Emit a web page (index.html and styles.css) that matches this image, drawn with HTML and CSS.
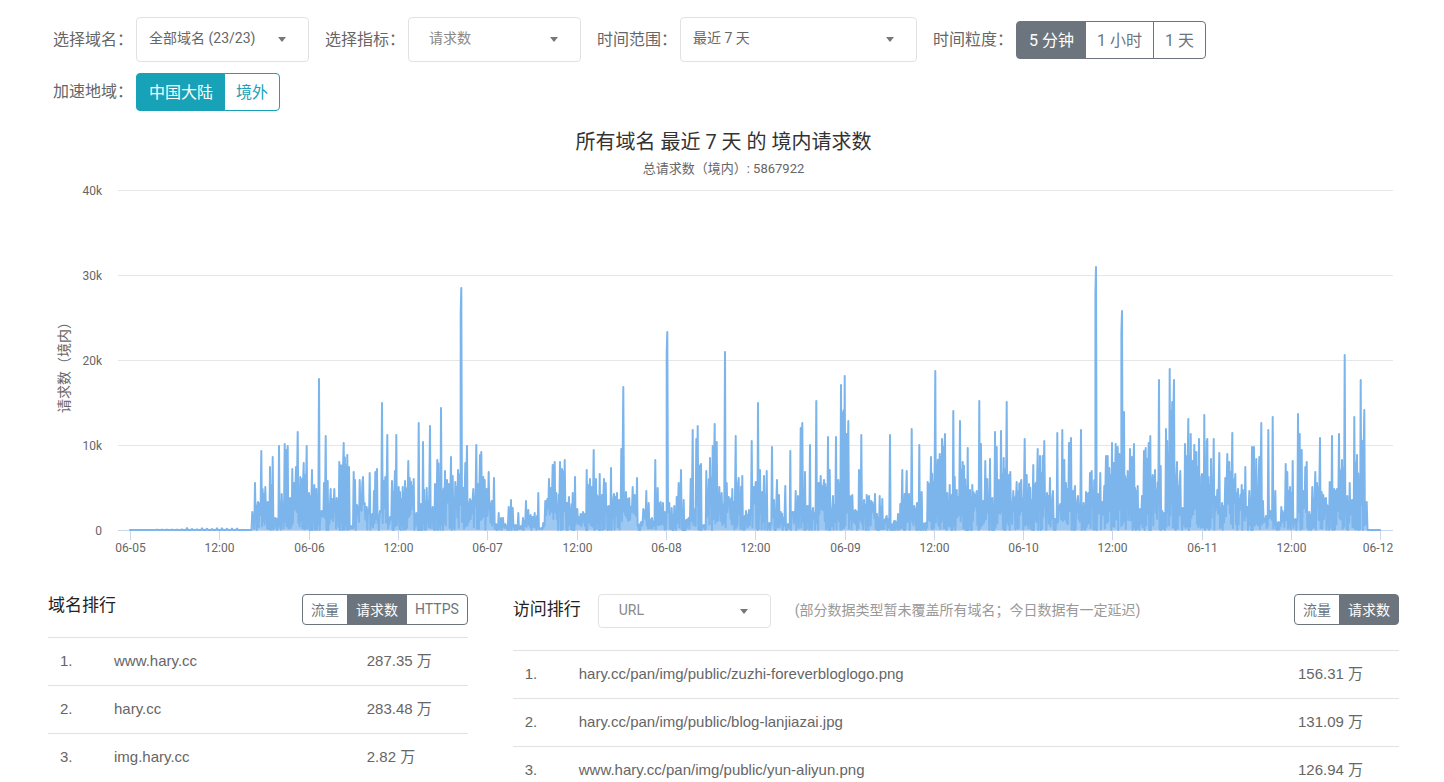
FILE: index.html
```html
<!DOCTYPE html>
<html lang="zh-CN">
<head>
    <meta charset="UTF-8">
    <meta name="viewport" content="width=device-width, initial-scale=1.0">
    <title>域名请求统计</title>
    <link rel="stylesheet" href="styles.css">
</head>
<body>
    <form class="filters">
        <div class="filter">
            <label class="filter-label" for="domain">选择域名：</label>
            <div class="select">
                <select id="domain"><option>全部域名 (23/23)</option></select>
                <svg class="caret" viewBox="0 0 8 5"><path d="M0 0h8L4 5z"/></svg>
            </div>
        </div>
        <div class="filter">
            <label class="filter-label" for="metric">选择指标：</label>
            <div class="select select-light">
                <select id="metric"><option>请求数</option><option>流量</option></select>
                <svg class="caret" viewBox="0 0 8 5"><path d="M0 0h8L4 5z"/></svg>
            </div>
        </div>
        <div class="filter">
            <label class="filter-label" for="range">时间范围：</label>
            <div class="select select-wide">
                <select id="range"><option>最近 7 天</option></select>
                <svg class="caret" viewBox="0 0 8 5"><path d="M0 0h8L4 5z"/></svg>
            </div>
        </div>
        <div class="filter">
            <span class="filter-label" id="stepLabel">时间粒度：</span>
            <div class="btn-group" role="group" aria-labelledby="stepLabel">
                <button type="button" class="btn active">5 分钟</button>
                <button type="button" class="btn">1 小时</button>
                <button type="button" class="btn">1 天</button>
            </div>
        </div>
        <div class="filter filter-row">
            <span class="filter-label" id="areaLabel">加速地域：</span>
            <div class="btn-group btn-group-info" role="group" aria-labelledby="areaLabel">
                <button type="button" class="btn active">中国大陆</button>
                <button type="button" class="btn">境外</button>
            </div>
        </div>
    </form>

    <section class="chart">
        <h1>所有域名 最近 7 天 的 境内请求数</h1>
        <p class="chart-total">总请求数（境内）: 5867922</p>
        <svg id="chart" viewBox="0 0 1444 382" role="img" aria-label="境内请求数">
            <g id="grid"></g>
            <path id="area" class="area"/>
            <path id="line" class="line"/>
            <text class="axis-title" transform="translate(69 184) rotate(-90)">请求数（境内）</text>
        </svg>
    </section>

    <div class="ranks">
        <section>
            <div class="rank-head">
                <h2>域名排行</h2>
                <div class="btn-group btn-group-sm" role="group" aria-label="域名排行">
                    <button type="button" class="btn">流量</button>
                    <button type="button" class="btn active">请求数</button>
                    <button type="button" class="btn">HTTPS</button>
                </div>
            </div>
            <table>
                <tr><td class="no">1.</td><td>www.hary.cc</td><td class="count">287.35 万</td></tr>
                <tr><td class="no">2.</td><td>hary.cc</td><td class="count">283.48 万</td></tr>
                <tr><td class="no">3.</td><td>img.hary.cc</td><td class="count">2.82 万</td></tr>
            </table>
        </section>
        <section>
            <div class="rank-head rank-head-visit">
                <h2><label for="visitType">访问排行</label></h2>
                <div class="select select-light select-sm">
                    <select id="visitType"><option>URL</option></select>
                    <svg class="caret" viewBox="0 0 8 5"><path d="M0 0h8L4 5z"/></svg>
                </div>
                <p class="hint">(部分数据类型暂未覆盖所有域名；今日数据有一定延迟)</p>
                <div class="btn-group btn-group-sm" role="group" aria-label="访问排行">
                    <button type="button" class="btn">流量</button>
                    <button type="button" class="btn active">请求数</button>
                </div>
            </div>
            <table>
                <tr><td class="no">1.</td><td>hary.cc/pan/img/public/zuzhi-foreverbloglogo.png</td><td class="count">156.31 万</td></tr>
                <tr><td class="no">2.</td><td>hary.cc/pan/img/public/blog-lanjiazai.jpg</td><td class="count">131.09 万</td></tr>
                <tr><td class="no">3.</td><td>www.hary.cc/pan/img/public/yun-aliyun.png</td><td class="count">126.94 万</td></tr>
            </table>
        </section>
    </div>

    <script src="chart.js"></script>
</body>
</html>
```

FILE: styles.css
```css
* {
    box-sizing: border-box;
}
body {
    margin: 0;
    background: #fff;
    color: #666;
    font-family: Roboto, "Noto Sans CJK SC", sans-serif;
    font-size: 14px;
}
h1, h2, p {
    margin: 0;
    font-weight: 400;
}

/* filters */
.filters {
    display: flex;
    flex-wrap: wrap;
    gap: 11px 16px;
    padding: 17px 53px 0;
}
.filter {
    display: flex;
    align-items: center;
    gap: 3px;
    font-size: 16px;
}
.filter-label {
    padding-bottom: 4px;
}
.filter-row {
    width: 100%;
}
.select {
    display: grid;
    align-items: center;
    width: 173px;
}
.select-wide {
    width: 237px;
}
.select select {
    grid-area: 1 / 1;
    width: 100%;
    height: 45px;
    padding: 0 40px 3px 12px;
    appearance: none;
    border: 1px solid #e2e2e2;
    border-radius: 4px;
    background: #fff;
    color: #666;
    font-family: inherit;
    font-size: 14px;
}
.select-light select {
    padding-left: 20px;
    color: #888;
}
.select-sm select {
    height: 34px;
}
.caret {
    grid-area: 1 / 1;
    justify-self: end;
    width: 8px;
    height: 5px;
    margin-right: 23px;
    fill: #777;
    pointer-events: none;
}

/* buttons */
.btn-group {
    display: flex;
}
.btn {
    height: 38px;
    margin: 0 0 0 -1px;
    padding: 0 11px 2px;
    border: 1px solid #6c757d;
    background: #fff;
    color: #6c757d;
    font-family: inherit;
    font-size: 16px;
    white-space: nowrap;
}
.btn:first-child {
    margin-left: 0;
    padding-left: 12px;
    border-radius: 4px 0 0 4px;
}
.btn:last-child {
    border-radius: 0 4px 4px 0;
}
.btn.active {
    background: #6c757d;
    color: #fff;
}
.btn-group-info .btn {
    border-color: #17a2b8;
    color: #17a2b8;
}
.btn-group-info .btn.active {
    background: #17a2b8;
    color: #fff;
}
.btn-group-sm .btn {
    height: 31px;
    padding: 0 8px 2px;
    font-size: 14px;
}

/* chart */
.chart {
    padding-top: 16px;
    text-align: center;
}
.chart h1,
.chart-total {
    padding: 0 45px 0 48px;
}
.chart h1 {
    color: #333;
    font-size: 20px;
    line-height: 30px;
}
.chart-total {
    font-size: 13px;
    line-height: 23px;
}
.chart svg {
    display: block;
    width: 100%;
}
.chart text {
    fill: #666;
    font-size: 12px;
    text-anchor: middle;
}
.chart .y-label {
    text-anchor: end;
}
.chart .axis-title {
    font-size: 14px;
}
.grid-line {
    stroke: #e6e6e6;
}
.axis-line {
    stroke: #ccd6eb;
}
.area {
    fill: #7cb5ec;
    fill-opacity: 0.75;
}
.line {
    fill: none;
    stroke: #7cb5ec;
    stroke-width: 2;
    stroke-linejoin: round;
    stroke-linecap: round;
}

/* rankings */
.ranks {
    display: grid;
    grid-template-columns: minmax(0, 9fr) minmax(0, 19fr);
    gap: 45px;
    align-items: start;
    padding: 32px 45px 0 48px;
}
.rank-head {
    display: flex;
    align-items: flex-start;
    margin-bottom: 12px;
}
.rank-head h2 {
    color: #222;
    font-size: 17px;
    line-height: 22px;
}
.rank-head .btn-group {
    margin-left: auto;
}
.rank-head-visit {
    margin-bottom: 22px;
}
.rank-head-visit h2 {
    padding: 4px 17px 0 0;
}
.hint {
    padding-left: 24px;
    color: #999;
    font-size: 14px;
    line-height: 32px;
}
table {
    width: 100%;
    border-collapse: collapse;
    font-family: "Liberation Sans", "Noto Sans CJK SC", sans-serif;
    font-size: 15px;
    line-height: 23px;
}
td {
    padding: 11px 0 13px 12px;
    border-top: 1px solid #e2e2e2;
}
.no {
    width: 54px;
}
.count {
    width: 113px;
}
```

FILE: chart.js
```js
// [x, height] of every burst, 85 units of height = 10k requests
const bursts = [
    [252.3,18],[255,47],[258,28],[261.3,79],[265.3,43],[267.7,28],[270,63],[272.7,73],[275.3,12],[279,84],
    [281.7,36],[284.7,86],[287.7,84],[290,32],[292.3,61],[294,47],[296,63],[297.7,98],[300.3,53],[303.7,67],
    [306.7,84],[309,37],[312,60],[314.3,45],[316.3,41],[319,151],[321.7,19],[324,47],[325.7,94],[327.7,49],
    [330.7,41],[332.3,31],[334.3,41],[336.7,32],[339.3,68],[343.7,87],[347.3,75],[349,63],[351,4],[353.7,58],
    [355,50],[357,25],[359.7,50],[363,53],[364.7,27],[366.7,23],[369.7,57],[372.3,16],[374,39],[375.3,58],
    [377,61],[380,19],[382,127],[385.3,53],[387.3,95],[390,13],[392,49],[395,59],[396.3,95],[398.7,43],
    [402.7,43],[405,49],[408.3,69],[409.7,52],[413.7,51],[416.3,17],[418.7,107],[420.7,26],[423,88],[426.7,42],
    [430,104],[432.7,23],[435,46],[437.3,70],[441,122],[445,59],[447,50],[449,46],[451,73],[452.7,54],
    [455.3,48],[458,60],[461.3,242],[463.3,42],[465.3,67],[467,84],[470,31],[473.3,41],[476.3,85],[478.3,46],
    [480,75],[481.3,78],[483.3,53],[484.7,50],[486.7,41],[488.7,58],[491.7,29],[494,52],[496,6],[498.7,17],
    [501,12],[503,12],[505.3,6],[508.7,23],[511,30],[512.7,22],[515.3,5],[518.3,17],[521,4],[523,12],
    [526,29],[528.3,20],[530.7,15],[532.7,13],[534.7,17],[538.3,37],[541.3,2],[543.3,7],[545.3,29],[547.3,31],
    [549,51],[551,42],[552.7,65],[554.7,68],[556.3,37],[560,68],[562,61],[564.7,70],[567,27],[569,33],
    [572.7,37],[575,53],[577.3,21],[580.7,16],[583,18],[586.7,60],[590,51],[591.7,43],[593.7,80],[596,51],
    [599.7,56],[602,35],[604,51],[605.7,47],[608.7,24],[611,62],[614,36],[617,37],[619,30],[621.3,81],
    [623.3,143],[626,38],[629.3,32],[632.7,43],[634.7,35],[637,52],[641.3,8],[643.3,21],[646.3,39],[648.7,27],
    [652,12],[655.3,70],[657.7,42],[660.7,28],[663,27],[667.3,198],[669.3,27],[671.7,22],[674.3,24],[676.7,33],
    [678.7,47],[681,60],[683.7,30],[688.7,12],[690.7,51],[692.7,100],[695,21],[696.3,91],[697.7,104],[701,66],
    [704,5],[706.3,59],[710,72],[712.7,84],[714.7,106],[716.7,88],[719.3,43],[721.7,37],[725,178],[726.7,47],
    [728.7,33],[732.3,41],[735.7,94],[738.7,52],[742.3,54],[746,19],[749,20],[751.7,89],[753.7,43],[755.7,48],
    [758,127],[760,60],[762.3,38],[764,54],[766.7,59],[769.3,7],[772,83],[774,30],[777,50],[779,35],
    [780.7,18],[785.3,44],[788,6],[790.3,79],[793.3,18],[795.7,39],[798,34],[800.7,102],[802.3,107],[805,58],
    [807.3,24],[810,85],[813,22],[816.3,129],[818.7,47],[820.7,54],[824,50],[828,93],[829.7,60],[833,34],
    [836,93],[838.3,50],[841,145],[844.7,154],[846.7,96],[848.3,109],[852.3,35],[855.3,20],[859,60],[861.3,95],
    [864,30],[866.7,35],[869,34],[871.3,29],[875,36],[877,16],[879.7,34],[882.3,31],[886.7,14],[890,95],
    [894.3,9],[898,16],[900.3,26],[902.3,60],[904.7,36],[906.7,59],[909,36],[911.7,101],[914.3,24],[917,27],
    [919.3,85],[921.7,38],[925.3,7],[927.7,48],[931,73],[935.3,159],[939.7,76],[942,91],[945,96],[947.3,37],
    [949.7,45],[953.3,119],[954.7,53],[956.7,40],[960,109],[962.7,68],[967.7,82],[970,40],[972.3,45],[976.7,39],
    [979.3,129],[981,86],[983.3,29],[985.3,69],[987.3,51],[990,71],[992.3,32],[995,98],[996.7,83],[998.7,50],
    [1001,99],[1003.7,72],[1006.7,128],[1010.3,58],[1013.3,39],[1016.7,48],[1021.3,50],[1024.7,91],[1026.7,55],[1029,46],
    [1033.3,65],[1035.7,47],[1037.7,81],[1040,74],[1042.7,74],[1044.3,89],[1047,37],[1050,52],[1053,39],[1055,11],
    [1057.3,97],[1060.3,26],[1062.3,100],[1064.3,70],[1066,47],[1069,87],[1071,92],[1073,39],[1075,44],[1078,34],
    [1081,100],[1083.7,27],[1086,38],[1088.3,37],[1090,57],[1091.7,59],[1096,263],[1098,36],[1100.3,57],[1102.3,28],
    [1104.3,44],[1106,74],[1107.7,74],[1109.3,62],[1112,87],[1113.7,67],[1115.7,86],[1117.7,83],[1119.3,76],[1122,219],
    [1124,118],[1127.7,59],[1130,81],[1132,73],[1134,86],[1137.7,44],[1140,21],[1142,34],[1144,79],[1145.7,82],
    [1148.7,87],[1150.3,94],[1152.7,55],[1155,60],[1159,150],[1160.7,64],[1162.3,19],[1164.3,17],[1166,101],[1169.7,161],
    [1174,150],[1177,68],[1180.3,59],[1182.7,22],[1185,86],[1188.3,111],[1190.7,96],[1192.7,69],[1194.3,85],[1196.3,78],
    [1199,91],[1202,56],[1204.3,115],[1207.3,91],[1211,71],[1213.7,91],[1217.3,40],[1219.3,77],[1222,27],[1225.3,52],
    [1227.3,76],[1229.3,68],[1232.3,97],[1235.3,56],[1238,41],[1241.7,45],[1245.3,63],[1247.3,23],[1249.3,39],[1252,83],
    [1254,83],[1256.3,71],[1259.3,73],[1261.3,107],[1263,29],[1266,14],[1268.3,100],[1270.3,19],[1272.7,113],[1275.3,39],
    [1278.7,8],[1281.3,23],[1285.7,66],[1287.3,58],[1290,43],[1292.7,69],[1295.7,11],[1298,116],[1299.7,96],[1301.7,80],
    [1303.3,39],[1305.3,63],[1306.7,68],[1309.3,18],[1312.3,43],[1315.3,58],[1317,47],[1320,92],[1321.7,38],[1323.3,35],
    [1326,32],[1329.7,48],[1332,94],[1334.3,41],[1337,41],[1339,96],[1342,70],[1344.7,175],[1347.3,34],[1349.7,47],
    [1352,30],[1354.3,113],[1357,75],[1360.7,150],[1362.3,89],[1364.3,120],[1366.7,28]
];

const BASE = 350;
const LEFT = 118;
const RIGHT = 1393;

// fixed seed, so the small samples stay the same on every load
let seed = 7;
function rand() {
    seed = (seed * 16807) % 2147483647;
    return seed / 2147483647;
}

// the quiet first hours
const points = [[130, 0]];
for (let x = 157; x < 240; x += 5) {
    points.push([x - 1, 0], [x, x > 180 ? 0.5 + rand() * 1.5 : 0.4], [x + 1, 0]);
}
points.push([251.5, 0]);

// short samples between two bursts
bursts.forEach(([x, h], i) => {
    // the biggest bursts last for two samples
    if (h > 190) points.push([x - 0.6, h * 0.9]);
    points.push([x, h]);
    const next = bursts[i + 1];
    if (!next) return;
    const gap = next[0] - x;
    const steps = Math.max(2, Math.round(gap / 0.62));
    const low = Math.min(h, next[1]);
    for (let s = 1; s < steps; s++) {
        const size = s % 2 ? Math.pow(rand(), 3) * Math.min(28, low) : low * (0.6 + rand() * 0.38);
        points.push([x + gap * s / steps, size]);
    }
});
points.push([1367.5, 0], [1380, 0]);

const path = points.map(([x, h]) => x.toFixed(1) + ' ' + (BASE - h).toFixed(1)).join('L');
document.getElementById('line').setAttribute('d', 'M' + path);
document.getElementById('area').setAttribute('d', 'M' + path + 'V' + BASE + 'H130Z');

let grid = '';
for (let i = 0; i <= 4; i++) {
    const y = BASE + 0.5 - i * 85;
    grid += `<line class="${i ? 'grid-line' : 'axis-line'}" x1="${LEFT}" x2="${RIGHT}" y1="${y}" y2="${y}"/>`;
    grid += `<text class="y-label" x="102" y="${y + 4}">${i ? i * 10 + 'k' : 0}</text>`;
}
for (let i = 0; i <= 14; i++) {
    const x = Math.floor(130.6 + i * 89.3) + 0.5;
    const label = i % 2 ? '12:00' : '06-' + String(5 + i / 2).padStart(2, '0');
    grid += `<line class="axis-line" x1="${x}" x2="${x}" y1="${BASE}" y2="${BASE + 10}"/>`;
    grid += `<text x="${Math.min(x, RIGHT - 15)}" y="372">${label}</text>`;
}
document.getElementById('grid').innerHTML = grid;
```
